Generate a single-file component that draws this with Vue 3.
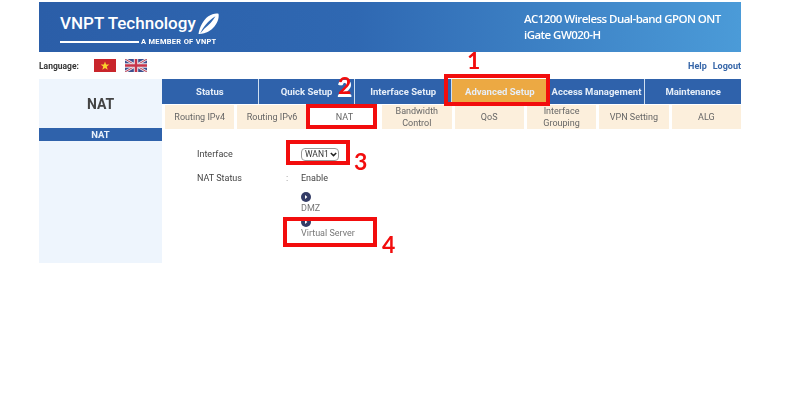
<template>
  <div class="page">
    <div class="wrap">
      <header class="banner">
        <div class="brand">
          <div class="brand-top">
            <span class="brand-name">VNPT Technology</span>
            <svg class="swoosh" width="21" height="21" viewBox="0 0 21 21">
              <path d="M0.5 21C1.5 14 5 7.5 10 3.5 14 0.8 18.5-0.2 20.5 0.8 21.5 6 18.5 12.5 13.5 16.5 9.5 19.5 5 20.8 3 20.8 2 20.9 1 21 0.5 21Z" fill="#fff" />
              <path d="M2.2 20.5C5 14 10 8 17.5 3.2 14.5 8.5 11 11.5 6.5 15.5" fill="#3068b2" />
            </svg>
          </div>
          <div class="brand-sub">
            <span class="brand-line"></span>
            <span>A MEMBER OF VNPT</span>
          </div>
        </div>
        <div class="model">
          <div>AC1200 Wireless Dual-band GPON ONT</div>
          <div>iGate GW020-H</div>
        </div>
      </header>

      <div class="lang-row">
        <span class="lang-label">Language:</span>
        <svg class="flag flag-vn" width="22" height="13" viewBox="0 0 22 13">
          <rect width="22" height="13" fill="#c9252b" />
          <polygon points="11,2.5 12.1,5.6 15.4,5.6 12.8,7.6 13.7,10.7 11,8.9 8.3,10.7 9.2,7.6 6.6,5.6 9.9,5.6" fill="#fbd02c" />
        </svg>
        <svg class="flag" width="22" height="13" viewBox="0 0 22 13">
          <rect width="22" height="13" fill="#3d4f8e" />
          <path d="M0 0L22 13M22 0L0 13" stroke="#e8e4ea" stroke-width="2.6" />
          <path d="M0 0L22 13M22 0L0 13" stroke="#c2455a" stroke-width="1" />
          <path d="M11 0V13M0 6.5H22" stroke="#e8e4ea" stroke-width="4.4" />
          <path d="M11 0V13M0 6.5H22" stroke="#c7354a" stroke-width="2.4" />
        </svg>
        <span class="links"><a>Help</a><a>Logout</a></span>
      </div>

      <div class="main">
        <aside class="side">
          <div class="side-title">NAT</div>
          <div class="side-item">NAT</div>
        </aside>
        <section class="body">
          <nav class="tabs">
            <div v-for="t in tabs" :key="t" class="tab" :class="{ active: t === 'Advanced Setup' }">{{ t }}</div>
          </nav>
          <nav class="subtabs">
            <div v-for="s in subtabs" :key="s" class="subtab" :class="{ current: s === 'NAT' }">{{ s }}</div>
          </nav>
          <div class="content">
            <div class="row">
              <span class="label">Interface</span>
              <span class="colon"></span>
              <div class="select-wrap">
                <select class="iface"><option>WAN1</option></select>
                <svg class="chev" width="7" height="5" viewBox="0 0 7 5">
                  <path d="M0.8 1L3.5 3.6 6.2 1" fill="none" stroke="#222" stroke-width="1.5" />
                </svg>
              </div>
            </div>
            <div class="row status">
              <span class="label">NAT Status</span>
              <span class="colon">:</span>
              <span>Enable</span>
            </div>
            <div class="action" v-for="a in actions" :key="a">
              <svg width="10" height="10" viewBox="0 0 10 10">
                <circle cx="5" cy="5" r="5" fill="#333c66" />
                <path d="M4 3L6.4 5 4 7Z" fill="#fff" />
              </svg>
              <span>{{ a }}</span>
            </div>
          </div>
        </section>
      </div>
    </div>

    <div class="mark box1"></div>
    <div class="mark box2"></div>
    <div class="mark box3"></div>
    <div class="mark box4"></div>
    <span class="num n1">1</span>
    <span class="num n2">2</span>
    <span class="num n3">3</span>
    <span class="num n4">4</span>
  </div>
</template>

<script setup>
const tabs = ['Status', 'Quick Setup', 'Interface Setup', 'Advanced Setup', 'Access Management', 'Maintenance']
const subtabs = ['Routing IPv4', 'Routing IPv6', 'NAT', 'Bandwidth Control', 'QoS', 'Interface Grouping', 'VPN Setting', 'ALG']
const actions = ['DMZ', 'Virtual Server']
</script>

<style>
html,
body {
  background: #fff;
}
</style>

<style scoped>
.page {
  position: relative;
  width: 796px;
  height: 400px;
  overflow: hidden;
  background: #fff;
  font-family: Roboto, "Liberation Sans", sans-serif;
  font-size: 9px;
  color: #444;
}

.wrap {
  width: 702px;
  margin-left: 39px;
  padding-top: 2px;
  filter: blur(0.35px);
}

.banner {
  display: flex;
  justify-content: space-between;
  height: 50px;
  background: linear-gradient(90deg, #2b5ea8 0%, #2f68b2 45%, #4b9bd8 100%);
  color: #fff;
}

.brand {
  padding: 9px 0 0 21px;
}

.brand-top {
  display: flex;
  align-items: center;
  height: 24px;
}

.brand-name {
  font-size: 17px;
  font-weight: 500;
  margin-right: 2px;
}

.swoosh {
  margin-top: 1px;
}

.brand-sub {
  display: flex;
  align-items: center;
  gap: 2px;
  margin-top: 2px;
  font-size: 7.5px;
  font-weight: 700;
  letter-spacing: 0.3px;
}

.brand-line {
  width: 79px;
  height: 2px;
  background: #fff;
}

.model {
  width: 217px;
  padding-top: 9px;
  font-family: "Open Sans", sans-serif;
  font-size: 11.5px;
  font-weight: 600;
  letter-spacing: -0.55px;
  line-height: 16px;
}

.lang-row {
  display: flex;
  align-items: center;
  height: 27px;
  font-size: 8.5px;
  font-weight: 700;
  color: #333;
}

.lang-label {
  width: 55px;
}

.flag {
  margin-right: 9px;
}

.links {
  display: flex;
  gap: 6px;
  margin-left: auto;
  font-size: 9px;
  color: #3565a8;
}

.main {
  display: flex;
}

.side {
  width: 123px;
  height: 184px;
  background: #eef5fd;
}

.side-title {
  height: 49px;
  line-height: 50px;
  text-align: center;
  font-size: 14px;
  font-weight: 700;
  color: #444;
}

.side-item {
  height: 13px;
  line-height: 13px;
  text-align: center;
  font-size: 9.5px;
  font-weight: 700;
  color: #e8f0fa;
  background: #2f62ab;
}

.body {
  flex: 1;
}

.tabs {
  display: grid;
  grid-template-columns: repeat(6, 1fr);
  gap: 1px;
  height: 25px;
  background: #cfdff0;
}

.tab {
  display: flex;
  align-items: center;
  justify-content: center;
  font-size: 9.5px;
  font-weight: 700;
  color: #e6eef8;
  background: #2f62ab;
  white-space: nowrap;
}

.tab.active {
  background: #eca943;
}

.subtabs {
  display: grid;
  grid-template-columns: repeat(8, 1fr);
  gap: 3px;
  height: 24px;
  padding: 1px 0 0 3px;
}

.subtab {
  display: flex;
  align-items: center;
  justify-content: center;
  text-align: center;
  line-height: 12px;
  color: #666;
  background: #fcefdc;
}

.subtab.current {
  background: #fff;
}

.content {
  padding: 18px 0 0 35px;
  color: #444;
}

.row {
  display: flex;
  align-items: center;
  height: 14px;
}

.row.status {
  margin-top: 10px;
}

.label {
  width: 89px;
}

.colon {
  width: 15px;
  color: #888;
}

.select-wrap {
  position: relative;
  display: flex;
}

.iface {
  width: 38px;
  height: 13px;
  padding: 0 0 0 3px;
  border: 1px solid #999;
  border-radius: 4px;
  background: #fff;
  appearance: none;
  font-family: inherit;
  font-size: 8.5px;
  color: #333;
}

.chev {
  position: absolute;
  top: 4px;
  right: 2px;
}

.action {
  display: flex;
  flex-direction: column;
  align-items: flex-start;
  gap: 1px;
  margin: 7px 0 0 104px;
  line-height: 11px;
  color: #777;
}

.action + .action {
  margin-top: 3px;
}

.mark {
  position: absolute;
  box-sizing: border-box;
  border: 4px solid #f20d0d;
}

.box1 {
  left: 444px;
  top: 74px;
  width: 106px;
  height: 32px;
}

.box2 {
  left: 306px;
  top: 104px;
  width: 71px;
  height: 25px;
}

.box3 {
  left: 286px;
  top: 140px;
  width: 64px;
  height: 25px;
}

.box4 {
  left: 283px;
  top: 217px;
  width: 94px;
  height: 30px;
}

.num {
  position: absolute;
  font-family: Lato, "Liberation Sans", sans-serif;
  font-size: 23px;
  font-weight: 700;
  line-height: 24px;
  color: #f20d0d;
}

.n1 {
  left: 467px;
  top: 48px;
}

.n2 {
  left: 338px;
  top: 73px;
  text-shadow: 0 3px 0 #fff, 1px 3px 0 #fff, -1px 3px 0 #fff;
}

.n3 {
  left: 354px;
  top: 149px;
}

.n4 {
  left: 382px;
  top: 232px;
}
</style>
